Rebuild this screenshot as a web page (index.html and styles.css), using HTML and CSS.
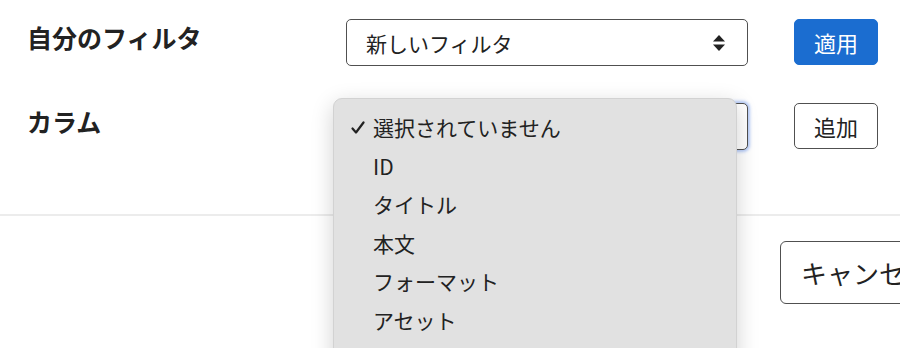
FILE: index.html
```html
<!DOCTYPE html>
<html lang="ja">
<head>
<meta charset="UTF-8">
<title>フィルタ設定</title>
<link rel="stylesheet" href="styles.css">
</head>
<body>
<div class="dialog">
  <div class="form">
    <div class="row">
      <div class="label">自分のフィルタ</div>
      <div class="select">
        <span class="select-text">新しいフィルタ</span>
        <svg class="arrows" width="14" height="16" viewBox="0 0 14 16">
          <path d="M7 0 L13 6.5 L1 6.5 Z" fill="#222"/>
          <path d="M7 16 L13 9.5 L1 9.5 Z" fill="#222"/>
        </svg>
      </div>
      <button class="btn btn-primary">適用</button>
    </div>
    <div class="row">
      <div class="label">カラム</div>
      <div class="select select-focus">
        <span class="select-text">選択されていません</span>
        <ul class="menu">
          <li class="menu-item selected">
            <svg class="check" width="14" height="14" viewBox="0 0 14 14">
              <path d="M1.5 7.5 L5 11.5 L12.5 1.5" fill="none" stroke="#222" stroke-width="2.2" stroke-linecap="round" stroke-linejoin="round"/>
            </svg>選択されていません</li>
          <li class="menu-item">ID</li>
          <li class="menu-item">タイトル</li>
          <li class="menu-item">本文</li>
          <li class="menu-item">フォーマット</li>
          <li class="menu-item">アセット</li>
          <li class="menu-item">作成日</li>
          <li class="menu-item">更新日</li>
        </ul>
      </div>
      <button class="btn">追加</button>
    </div>
  </div>
  <div class="footer">
    <button class="btn btn-large">キャンセル</button>
    <button class="btn btn-large btn-primary">保存</button>
  </div>
</div>
</body>
</html>
```

FILE: styles.css
```css
html {
  overflow: hidden;
  height: 100%;
}
body {
  margin: 0;
  padding: 0;
  min-height: 100%;
  background: #fff;
  font-family: "Noto Sans CJK JP", "Noto Sans", sans-serif;
  color: #222;
}
.dialog {
  width: 1060px;
}
.form {
  display: flex;
  flex-direction: column;
  gap: 37px;
  padding: 19px 0 64px 27px;
  border-bottom: 2px solid #ececec;
}
.row {
  display: flex;
  align-items: flex-start;
}
.label {
  width: 319px;
  font-size: 25px;
  font-weight: bold;
  line-height: 36px;
}
.select {
  position: relative;
  box-sizing: border-box;
  width: 402px;
  height: 47px;
  border: 1px solid #505050;
  border-radius: 5px;
  display: flex;
  align-items: center;
  justify-content: space-between;
  padding: 0 21px 0 19px;
  font-size: 21px;
  background: #fff;
}
.select-focus {
  box-shadow: 0 0 3px 2px rgba(90, 140, 240, 0.45);
}
.arrows {
  display: block;
}
.btn {
  box-sizing: border-box;
  margin-left: 46px;
  width: 84px;
  height: 46px;
  border: 1px solid #505050;
  border-radius: 5px;
  background: #fff;
  color: #222;
  font-family: "Noto Sans CJK JP", "Noto Sans", sans-serif;
  font-size: 22px;
  padding: 0;
}
.btn-primary {
  background: #1b6dd0;
  border-color: #1b6dd0;
  color: #fff;
}
.menu {
  position: absolute;
  left: -14px;
  top: -6px;
  width: 402px;
  margin: 0;
  padding: 9px 0;
  list-style: none;
  background: #e1e1e1;
  border: 1px solid #d2d2d2;
  border-radius: 9px;
  box-shadow: 0 6px 22px rgba(0, 0, 0, 0.18);
  z-index: 5;
}
.menu-item {
  position: relative;
  height: 38.6px;
  line-height: 38.6px;
  padding-left: 39px;
  font-size: 21px;
  color: #222;
}
.check {
  position: absolute;
  left: 17px;
  top: 13px;
}
.footer {
  display: flex;
  justify-content: flex-end;
  gap: 14px;
  padding: 25px 0;
}
.btn-large {
  margin-left: 0;
  width: auto;
  height: 63px;
  padding: 0 20px;
  font-size: 26px;
  border-radius: 6px;
}
```
